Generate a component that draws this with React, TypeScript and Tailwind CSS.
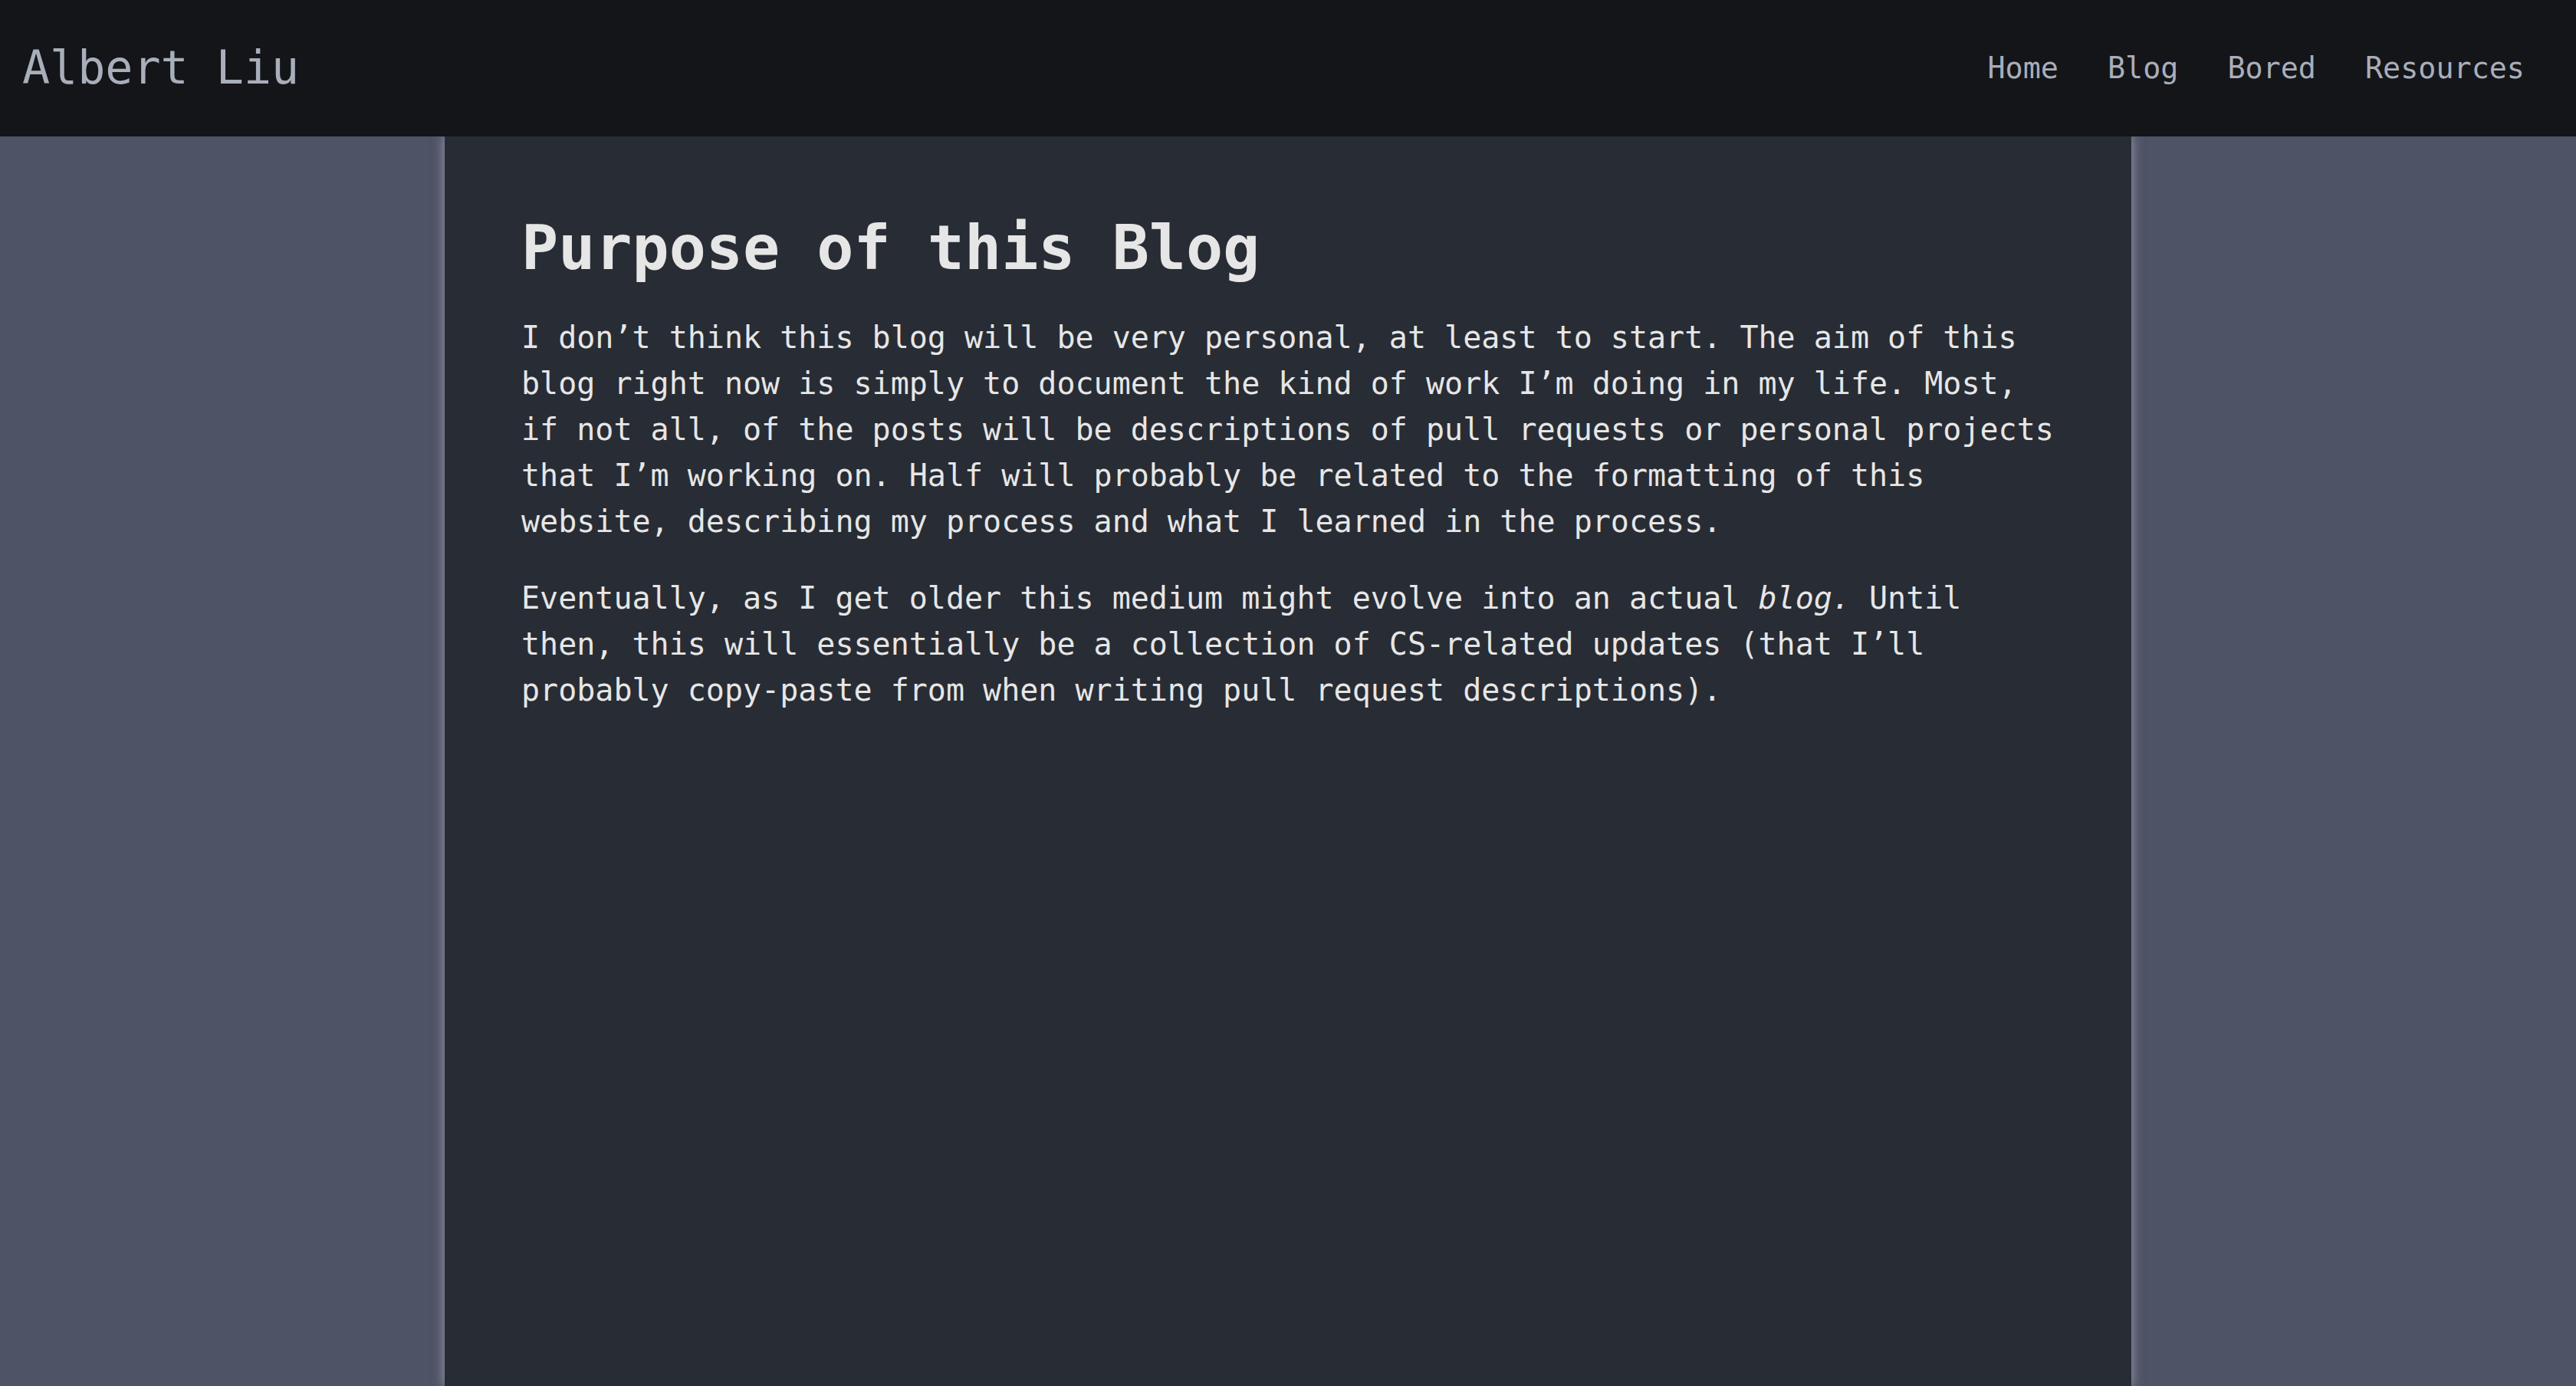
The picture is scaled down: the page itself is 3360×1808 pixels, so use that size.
import React from "react";

export default function App() {
  const mono = { fontFamily: '"DejaVu Sans Mono", "Liberation Mono", monospace' };
  return (
    <div className="min-h-screen bg-[#4e5466] flex flex-col" style={mono}>
      <header className="relative z-10 h-[178px] bg-[#141518] flex items-center justify-between pl-[29px] pr-[35px] shrink-0">
        <div className="text-[60px] leading-[1.164] text-[#a9aebb]">Albert Liu</div>
        <nav className="flex items-center text-[38.4px] leading-[1.164] text-[#a9aebb]">
          <a className="px-8">Home</a>
          <a className="px-8">Blog</a>
          <a className="px-8">Bored</a>
          <a className="px-8">Resources</a>
        </nav>
      </header>
      <main className="flex-1 flex justify-center">
        <article className="w-[2200px] bg-[#282c34] shadow-[0_0_12px_2px_rgba(180,185,200,0.6)] pt-[99px] pl-[100px] pr-[92px] pb-[96px] min-h-[1630px] text-[#e6e6e6]">
          <h1 className="text-[80px] leading-[94px] font-bold mb-[39px] text-[#e6e6e6]">Purpose of this Blog</h1>
          <p className="text-[40px] leading-[60px] mb-[40px]">
            I don’t think this blog will be very personal, at least to start. The aim of this blog right now is simply to document the kind of work I’m doing in my life. Most, if not all, of the posts will be descriptions of pull requests or personal projects that I’m working on. Half will probably be related to the formatting of this website, describing my process and what I learned in the process.
          </p>
          <p className="text-[40px] leading-[60px] mb-[40px]">
            Eventually, as I get older this medium might evolve into an actual <em className="italic">blog.</em> Until then, this will essentially be a collection of CS-related updates (that I’ll probably copy-paste from when writing pull request descriptions).
          </p>
        </article>
      </main>
    </div>
  );
}
